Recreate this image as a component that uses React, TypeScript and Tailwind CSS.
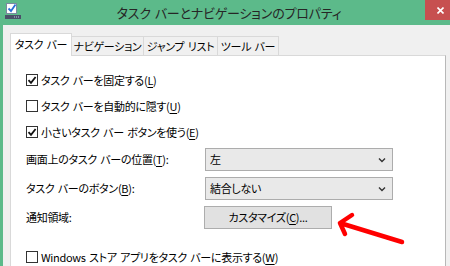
import React from 'react'

const jp = "font-['Noto_Sans_CJK_JP','Noto_Sans',sans-serif] [font-feature-settings:'palt']"
const txt = 'text-[11px] tracking-[-0.3px] text-black leading-none whitespace-nowrap'

function Key({ k }: { k: string }) {
  return (
    <>
      (<span className="underline underline-offset-2">{k}</span>)
    </>
  )
}

function CheckBox({ checked, children }: { checked?: boolean; children: React.ReactNode }) {
  return (
    <div className="flex items-center h-[26px]">
      <div className="w-[12px] h-[12px] border border-[#333] bg-white flex items-center justify-center">
        {checked && (
          <svg width="10" height="10" viewBox="0 0 10 10">
            <path d="M1.5 5.2 L4 7.8 L8.6 2" fill="none" stroke="#111" strokeWidth="1.8" />
          </svg>
        )}
      </div>
      <span className={`ml-[3px] ${txt}`}>{children}</span>
    </div>
  )
}

function Select({ value }: { value: string }) {
  return (
    <div className="w-[188px] h-[23px] border border-[#acacac] bg-[#e9e9e9] flex items-center justify-between pl-[4px] pr-[6px]">
      <span className={txt}>{value}</span>
      <svg width="8" height="6" viewBox="0 0 8 6">
        <path d="M1 1.5 L4 4.5 L7 1.5" fill="none" stroke="#333" strokeWidth="1.4" />
      </svg>
    </div>
  )
}

// wider gap than the proportional space, as in the dialog's font
const sp = '\u2004'

const tabs = [`ナビゲーション`, `ジャンプ${sp}リスト`, `ツール${sp}バー`]

export default function App() {
  return (
    <div className={`relative w-[450px] h-[266px] overflow-hidden bg-[#5cba8a] flex flex-col ${jp}`}>
      {/* title bar */}
      <div className="relative h-[25px] shrink-0 flex items-center justify-center">
        <div className="absolute left-[5px] top-[3px]">
          <svg width="16" height="16" viewBox="0 0 16 16">
            <rect x="1.5" y="0.5" width="10" height="10" fill="#fff" stroke="#7a8aa0" />
            <path d="M3.5 5.5 L6 8 L10.5 1.5" fill="none" stroke="#2a6fd6" strokeWidth="1.8" />
            <rect x="0" y="12" width="16" height="4" fill="#4a5068" />
            <rect x="9" y="13.5" width="1" height="1" fill="#b8c4e0" />
            <rect x="11" y="13.5" width="1" height="1" fill="#b8c4e0" />
            <rect x="13" y="13.5" width="1" height="1" fill="#b8c4e0" />
          </svg>
        </div>
        <span className="text-[13px] tracking-[-0.2px] text-[#262626] leading-none ml-[8px]">
          {`タスク${sp}バーとナビゲーションのプロパティ`}
        </span>
        <div className="absolute left-[425px] top-0 w-[25px] h-[20px] bg-[#c75050] flex items-center pl-[12px]">
          <svg width="7" height="7" viewBox="0 0 7 7">
            <path d="M0.5 0.5 L6.5 6.5 M6.5 0.5 L0.5 6.5" stroke="#fff" strokeWidth="1.6" />
          </svg>
        </div>
      </div>

      {/* body */}
      <div className="flex-1 ml-[3px] bg-[#f0f0f0] pl-[7px] pr-[4px] pt-[8px] flex flex-col">
        <div className="flex items-end h-[22px]">
          <div className={`relative z-10 h-[23px] -mb-px w-[62px] bg-white border border-b-0 border-[#d9d9d9] flex items-center justify-center pb-[2px] ${txt}`}>
            {`タスク${sp}バー`}
          </div>
          {tabs.map((t, i) => (
            <div
              key={t}
              className={`h-[19px] bg-[#f0f0f0] border border-b-0 border-[#d9d9d9] -ml-px flex items-center justify-center ${txt} ${
                i === 0 ? 'w-[73px]' : i === 1 ? 'w-[75px]' : 'w-[62px]'
              }`}
            >
              {t}
            </div>
          ))}
        </div>

        <div className="flex-1 bg-white border border-[#d9d9d9] border-r-[#b8b8b8] pl-[15px] pt-[11px] flex flex-col">
          <CheckBox checked>
            {`タスク${sp}バーを固定する`}<Key k="L" />
          </CheckBox>
          <CheckBox>
            {`タスク${sp}バーを自動的に隠す`}<Key k="U" />
          </CheckBox>
          <CheckBox checked>
            {`小さいタスク${sp}バー${sp}ボタンを使う`}<Key k="E" />
          </CheckBox>

          <div className="flex flex-col gap-[6px] mt-[3px]">
            <div className="flex items-center">
              <span className={`w-[179px] ${txt}`}>
                {`画面上のタスク${sp}バーの位置`}<Key k="T" />:
              </span>
              <Select value="左" />
            </div>
            <div className="flex items-center">
              <span className={`w-[179px] ${txt}`}>
                {`タスク${sp}バーのボタン`}<Key k="B" />:
              </span>
              <Select value="結合しない" />
            </div>
            <div className="flex items-center">
              <span className={`w-[178px] ${txt}`}>通知領域:</span>
              <div className={`w-[128px] h-[23px] border border-[#adadad] bg-[#e1e1e1] flex items-center justify-center ${txt}`}>
                カスタマイズ<Key k="C" />...
              </div>
            </div>
          </div>

          <div className="mt-[15px]">
            <CheckBox>
              {`Windows${sp}ストア${sp}アプリをタスク${sp}バーに表示する`}<Key k="W" />
            </CheckBox>
          </div>
        </div>
      </div>

      {/* annotation arrow */}
      <svg className="absolute left-0 top-0 pointer-events-none" width="450" height="266" viewBox="0 0 450 266">
        <path
          d="M402 242 L340 223 M340 223 L352 215 M340 223 L345 234"
          fill="none"
          stroke="#ff0000"
          strokeWidth="4.5"
          strokeLinecap="round"
          strokeLinejoin="round"
        />
      </svg>
    </div>
  )
}
